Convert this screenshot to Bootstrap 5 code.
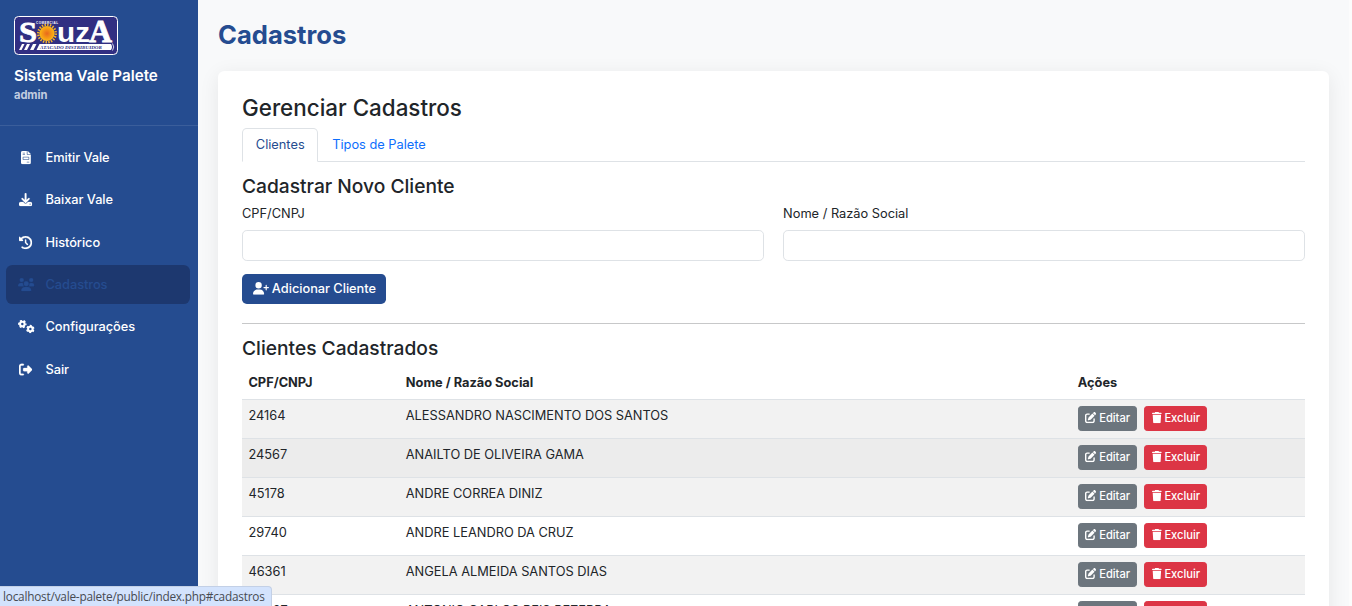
<!DOCTYPE html>
<html lang="pt-BR">
<head>
<meta charset="utf-8">
<meta name="viewport" content="width=device-width, initial-scale=1">
<title>Sistema Vale Palete</title>
<link href="https://cdn.jsdelivr.net/npm/bootstrap@5.3.0/dist/css/bootstrap.min.css" rel="stylesheet">
<style>
html { font-size: 12.8px; overflow: hidden; }
body { font-family: Inter, "Liberation Sans", sans-serif; background: #f8f9fa; height: 606px; overflow: hidden; border-right: 3px solid #fcfcfc; }
.shell { height: 606px; overflow: hidden; }
.sidebar { width: 198px; height: 606px; background: #254c90; color: #fff; }
.brand-box { height: 126px; padding: 16px 14px 0; border-bottom: 1px solid #3b5e9b; }
.brand-box svg { display: block; width: 104px; height: 39px; }
.brand-title { font-size: 15.2px; font-weight: 600; line-height: 18px; margin-top: 12px; }
.brand-user { font-size: 11.2px; font-weight: 700; line-height: 16px; margin-top: 2px; color: #c0cce0; letter-spacing: -.1px; }
.side-nav { padding: 12.3px 8px 0 6px; }
.side-nav .nav-link { color: #fff; font-weight: 500; height: 38.4px; margin-bottom: 4px; padding: 0 0 0 12px; border-radius: 6.4px; letter-spacing: -.05px; }
.side-nav .nav-link.active { background: #1d386f; color: #254c90; }
.side-nav .ico-slot { width: 16px; margin-right: 11.5px; display: flex; justify-content: center; }
.side-nav .fa { height: 13.2px; stroke: currentColor; stroke-width: 10px; }
.fa { height: 1em; width: auto; fill: currentColor; vertical-align: -.125em; overflow: visible; flex-shrink: 0; }
.main-area { padding: 19px 20px 0; }
.page-title { font-size: 25.6px; font-weight: 700; color: #254c90; line-height: 31px; margin: 0 0 21px; }
.panel { background: #fff; border-radius: 6.4px; padding: 23px 24px 24px; box-shadow: 0 4px 20px rgba(0,0,0,.08); height: 700px; }
.panel h3 { font-size: 22.4px; line-height: 27px; margin-bottom: 7px; }
.panel h4 { font-size: 19.2px; line-height: 23px; margin-bottom: 6.4px; }
.nav-tabs .nav-link { padding: 6.4px 12.8px; height: 34px; color: #0d6efd; }
.nav-tabs .nav-link.active { color: #254c90; }
.form-label { margin-bottom: 6.4px; }
.btn-brand { background: #254c90; color: #fff; padding: 4.4px 9.5px; margin-top: .7px; letter-spacing: -.03px; }
.btn-brand, .act-row .btn { font-weight: 500; }
.form-rule { margin: 19px 0 13px; }
.table { table-layout: fixed; }
.table thead th { padding-bottom: 7.4px; }
.act-row { gap: 7px; }
.act-row .btn { padding: 3px 6.3px; height: 25px; line-height: 17px; letter-spacing: -.03px; }
.table tbody td { height: 39px; padding-top: 5.4px; }
.c1 { width: 157.4px; } .c2 { width: 672px; }
.row-hover > * { --bs-table-accent-bg: rgba(0,0,0,.075) !important; }
.status-tip { position: fixed; left: 0; bottom: 0; width: 272px; height: 20px; background: #d3e3fd; border: 1px solid #c3d0e6; border-left: 0; border-bottom: 0; border-top-right-radius: 4px; color: #474b52; font: 11.8px/19px "Open Sans", "Noto Sans", sans-serif; letter-spacing: -.21px; padding-left: 3px; white-space: nowrap; }
</style>
</head>
<body>
<svg width="0" height="0" class="position-absolute">
<defs>
<symbol id="invoice" viewBox="0 0 384 512"><path d="M64 0C28.7 0 0 28.7 0 64V448c0 35.3 28.7 64 64 64H320c35.3 0 64-28.7 64-64V160H256c-17.7 0-32-14.3-32-32V0H64zM256 0V128H384L256 0zM80 64h64c8.8 0 16 7.2 16 16s-7.2 16-16 16H80c-8.8 0-16-7.2-16-16s7.2-16 16-16zm0 64h64c8.8 0 16 7.2 16 16s-7.2 16-16 16H80c-8.8 0-16-7.2-16-16s7.2-16 16-16zm16 96H288c17.7 0 32 14.3 32 32v64c0 17.7-14.3 32-32 32H96c-17.7 0-32-14.3-32-32V256c0-17.7 14.3-32 32-32zm0 32v64H288V256H96zM240 416h64c8.8 0 16 7.2 16 16s-7.2 16-16 16H240c-8.8 0-16-7.2-16-16s7.2-16 16-16z"/></symbol>
<symbol id="download" viewBox="0 0 512 512"><path d="M288 32c0-17.7-14.3-32-32-32s-32 14.3-32 32V274.7l-73.4-73.4c-12.5-12.5-32.8-12.5-45.3 0s-12.5 32.8 0 45.3l128 128c12.5 12.5 32.8 12.5 45.3 0l128-128c12.5-12.5 12.5-32.8 0-45.3s-32.8-12.5-45.3 0L288 274.7V32zM64 352c-35.3 0-64 28.7-64 64v32c0 35.3 28.7 64 64 64H448c35.3 0 64-28.7 64-64V416c0-35.3-28.7-64-64-64H346.5l-45.3 45.3c-25 25-65.5 25-90.5 0L165.5 352H64zm368 56a24 24 0 1 1 0 48 24 24 0 1 1 0-48z"/></symbol>
<symbol id="history" viewBox="0 0 512 512"><path d="M75 75L41 41C25.9 25.9 0 36.6 0 57.9V168c0 13.3 10.7 24 24 24H134.1c21.4 0 32.1-25.9 17-41l-30.8-30.8C155 85.5 203 64 256 64c106 0 192 86 192 192s-86 192-192 192c-40.8 0-78.6-12.7-109.7-34.4c-14.5-10.1-34.4-6.6-44.6 7.9s-6.6 34.4 7.9 44.6C151.2 495 201.7 512 256 512c141.4 0 256-114.6 256-256S397.4 0 256 0C185.3 0 121.3 28.7 75 75zm181 53c-13.3 0-24 10.7-24 24V256c0 6.4 2.5 12.5 7 17l72 72c9.4 9.4 24.6 9.4 33.9 0s9.4-24.6 0-33.9l-65-65V152c0-13.3-10.7-24-24-24z"/></symbol>
<symbol id="users" viewBox="0 0 640 512"><path d="M144 0a80 80 0 1 1 0 160A80 80 0 1 1 144 0zM512 0a80 80 0 1 1 0 160A80 80 0 1 1 512 0zM0 298.7C0 239.8 47.8 192 106.7 192h42.7c15.9 0 31 3.5 44.6 9.7c-1.3 7.2-1.9 14.7-1.9 22.3c0 38.2 16.8 72.5 43.3 96H21.3C9.6 320 0 310.4 0 298.7zM405.3 320c26.6-23.5 43.3-57.8 43.3-96c0-7.6-.7-15-1.9-22.3c13.6-6.3 28.7-9.7 44.6-9.7h42.7C592.2 192 640 239.8 640 298.7c0 11.8-9.6 21.3-21.3 21.3H405.3zM224 224a96 96 0 1 1 192 0 96 96 0 1 1 -192 0zM128 485.3C128 411.7 187.7 352 261.3 352H378.7C452.3 352 512 411.7 512 485.3c0 14.7-11.9 26.7-26.7 26.7H154.7c-14.7 0-26.7-11.9-26.7-26.7z"/></symbol>
<symbol id="gears" viewBox="0 0 640 512"><g fill="none" stroke="currentColor"><circle cx="168" cy="158" r="88" stroke-width="82"/><circle cx="168" cy="158" r="138" stroke-width="54" stroke-dasharray="78 66.5" stroke-dashoffset="39"/><circle cx="480" cy="352" r="88" stroke-width="82"/><circle cx="480" cy="352" r="138" stroke-width="54" stroke-dasharray="78 66.5" stroke-dashoffset="-33"/></g></symbol>
<symbol id="logout" viewBox="0 0 512 512"><path d="M377.9 105.9L500.7 228.7c7.2 7.2 11.3 17.1 11.3 27.3s-4.1 20.1-11.3 27.3L377.9 406.1c-6.4 6.4-15 9.9-24 9.9c-18.7 0-33.9-15.2-33.9-33.9l0-62.1-128 0c-17.7 0-32-14.3-32-32l0-64c0-17.7 14.3-32 32-32l128 0 0-62.1c0-18.7 15.2-33.9 33.9-33.9c9 0 17.6 3.6 24 9.9zM160 96L96 96c-17.7 0-32 14.3-32 32l0 256c0 17.7 14.3 32 32 32l64 0c17.7 0 32 14.3 32 32s-14.3 32-32 32l-64 0c-53 0-96-43-96-96L0 128C0 75 43 32 96 32l64 0c17.7 0 32 14.3 32 32s-14.3 32-32 32z"/></symbol>
<symbol id="user-plus" viewBox="0 0 640 512"><path d="M96 128a128 128 0 1 1 256 0A128 128 0 1 1 96 128zM0 482.3C0 383.8 79.8 304 178.3 304h91.4C368.2 304 448 383.8 448 482.3c0 16.4-13.3 29.7-29.7 29.7H29.7C13.3 512 0 498.7 0 482.3zM504 312V248H440c-13.3 0-24-10.7-24-24s10.7-24 24-24h64V136c0-13.3 10.7-24 24-24s24 10.7 24 24v64h64c13.3 0 24 10.7 24 24s-10.7 24-24 24H552v64c0 13.3-10.7 24-24 24s-24-10.7-24-24z"/></symbol>
<symbol id="edit" viewBox="0 0 512 512"><path d="M471.6 21.7c-21.9-21.9-57.3-21.9-79.2 0L362.3 51.7l97.9 97.9 30.1-30.1c21.9-21.9 21.9-57.3 0-79.2L471.6 21.7zm-299.2 220c-6.1 6.1-10.8 13.6-13.5 21.9l-29.6 88.8c-2.9 8.6-.6 18.1 5.8 24.6s15.9 8.7 24.6 5.8l88.8-29.6c8.2-2.7 15.7-7.4 21.9-13.5L437.7 172.3 339.7 74.3 172.4 241.7zM96 64C43 64 0 107 0 160V416c0 53 43 96 96 96H352c53 0 96-43 96-96V320c0-17.7-14.3-32-32-32s-32 14.3-32 32v96c0 17.7-14.3 32-32 32H96c-17.7 0-32-14.3-32-32V160c0-17.7 14.3-32 32-32h96c17.7 0 32-14.3 32-32s-14.3-32-32-32H96z"/></symbol>
<symbol id="trash" viewBox="0 0 448 512"><path d="M135.2 17.7L128 32H32C14.3 32 0 46.3 0 64S14.3 96 32 96H416c17.7 0 32-14.3 32-32s-14.3-32-32-32H320l-7.2-14.3C307.4 6.8 296.3 0 284.2 0H163.8c-12.1 0-23.2 6.8-28.6 17.7zM416 128H32L53.2 467c1.6 25.3 22.6 45 47.9 45H346.9c25.3 0 46.3-19.7 47.9-45L416 128z"/></symbol>
<radialGradient id="sun"><stop offset="0" stop-color="#e8681c"/><stop offset="1" stop-color="#fdb813"/></radialGradient>
</defs>
</svg>
<div class="d-flex shell">
<aside class="sidebar flex-shrink-0">
<div class="brand-box">
<svg viewBox="0 0 104 39">
<rect x=".5" y=".5" width="103" height="38" rx="4" fill="#312f82" stroke="#fff"/>
<g font-weight="700" fill="#fff" stroke="#fff" stroke-width=".8">
<text x="5" y="25.5" font-family="Liberation Serif, serif" font-size="30" textLength="18" lengthAdjust="spacingAndGlyphs">S</text>
<text x="43" y="25.5" font-family="Liberation Sans, sans-serif" font-size="27" stroke="none" textLength="33" lengthAdjust="spacingAndGlyphs">uz</text>
<text x="75" y="25.5" font-family="Liberation Serif, serif" font-size="31" textLength="23" lengthAdjust="spacingAndGlyphs">A</text>
</g>
<circle cx="33" cy="17.5" r="8.8" fill="none" stroke="#f7b52b" stroke-width="2.4" stroke-dasharray="1.4 1.36"/>
<circle cx="33" cy="17.5" r="7.6" fill="url(#sun)"/>
<text x="22" y="8" font-family="Liberation Sans, sans-serif" font-weight="700" font-size="3" textLength="22" fill="#fff">COMERCIAL</text>
<path d="M8 28h2.5l-3 6H5zM13 28h3l-3 6h-3zM19 28h3.500l-3 6H16zM25.500 28H97q2 3 0 6H22.500z" fill="#fff"/>
<path d="M98.500 27.500q2.500 3.500 0 7" stroke="#fff" fill="none" stroke-width=".8"/>
<text x="26" y="33" font-family="Liberation Serif, serif" font-weight="700" font-style="italic" font-size="5" textLength="62" lengthAdjust="spacingAndGlyphs" fill="#312f82">ATACADO DISTRIBUIDOR</text>
</svg>
<div class="brand-title">Sistema Vale Palete</div>
<div class="brand-user">admin</div>
</div>
<nav class="nav flex-column side-nav">
<a class="nav-link d-flex align-items-center" href="#"><span class="ico-slot"><svg class="fa" viewBox="0 0 384 512"><use href="#invoice"/></svg></span>Emitir Vale</a>
<a class="nav-link d-flex align-items-center" href="#"><span class="ico-slot"><svg class="fa" viewBox="0 0 512 512"><use href="#download"/></svg></span>Baixar Vale</a>
<a class="nav-link d-flex align-items-center" href="#"><span class="ico-slot"><svg class="fa" viewBox="0 0 512 512"><use href="#history"/></svg></span>Histórico</a>
<a class="nav-link d-flex align-items-center active" href="#"><span class="ico-slot"><svg class="fa" viewBox="0 0 640 512"><use href="#users"/></svg></span>Cadastros</a>
<a class="nav-link d-flex align-items-center" href="#"><span class="ico-slot"><svg class="fa" viewBox="0 0 640 512"><use href="#gears"/></svg></span>Configurações</a>
<a class="nav-link d-flex align-items-center" href="#"><span class="ico-slot"><svg class="fa" viewBox="0 0 512 512"><use href="#logout"/></svg></span>Sair</a>
</nav>
</aside>
<main class="main-area flex-grow-1">
<h2 class="page-title">Cadastros</h2>
<section class="panel">
<h3>Gerenciar Cadastros</h3>
<ul class="nav nav-tabs mb-3">
<li class="nav-item"><a class="nav-link active" href="#">Clientes</a></li>
<li class="nav-item"><a class="nav-link" href="#">Tipos de Palete</a></li>
</ul>
<h4>Cadastrar Novo Cliente</h4>
<form>
<div class="row mb-3">
<div class="col-md-6"><label class="form-label" for="doc">CPF/CNPJ</label><input id="doc" class="form-control"></div>
<div class="col-md-6"><label class="form-label" for="nome">Nome / Razão Social</label><input id="nome" class="form-control"></div>
</div>
<button type="button" class="btn btn-brand"><svg class="fa" viewBox="0 0 640 512"><use href="#user-plus"/></svg> Adicionar Cliente</button>
</form>
<hr class="form-rule">
<h4>Clientes Cadastrados</h4>
<table class="table table-striped">
<thead><tr><th class="c1">CPF/CNPJ</th><th class="c2">Nome / Razão Social</th><th>Ações</th></tr></thead>
<tbody id="rows"></tbody>
</table>
</section>
</main>
</div>
<div class="status-tip">localhost/vale-palete/public/index.php#cadastros</div>
<script src="https://cdn.jsdelivr.net/npm/bootstrap@5.3.0/dist/js/bootstrap.bundle.min.js"></script>
<script>
const clients = [["24164","ALESSANDRO NASCIMENTO DOS SANTOS"],["24567","ANAILTO DE OLIVEIRA GAMA"],["45178","ANDRE CORREA DINIZ"],["29740","ANDRE LEANDRO DA CRUZ"],["46361","ANGELA ALMEIDA SANTOS DIAS"],["24467","ANTONIO CARLOS REIS BEZERRA"]];
document.getElementById("rows").innerHTML = clients.map(([id, name], i) => `<tr class="${i === 1 ? "row-hover" : ""}"><td>${id}</td><td>${name}</td><td><div class="d-flex act-row"><button class="btn btn-sm btn-secondary"><svg class="fa" viewBox="0 0 512 512"><use href="#edit"/></svg> Editar</button><button class="btn btn-sm btn-danger"><svg class="fa" viewBox="0 0 448 512"><use href="#trash"/></svg> Excluir</button></div></td></tr>`).join("");
</script>
</body>
</html>
